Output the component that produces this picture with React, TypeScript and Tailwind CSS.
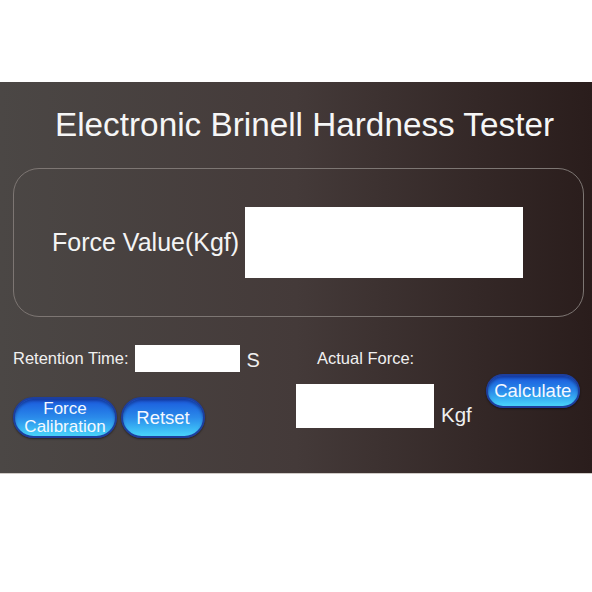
import React from 'react';

const font = { fontFamily: '"Liberation Sans", Arial, sans-serif' };

const BlueButton: React.FC<{ className?: string; children: React.ReactNode }> = ({ className = '', children }) => (
  <button
    className={`flex items-center justify-center rounded-full border-2 border-[#1d3f9e] bg-linear-to-b from-[#1d57dc] via-[#2b8aea] to-[#4ad4fa] text-[#f4f8ff] shadow-[inset_0_2px_3px_rgba(0,0,40,0.35),0_1px_2px_rgba(0,0,0,0.5)] ${className}`}
  >
    {children}
  </button>
);

export default function App() {
  return (
    <div className="h-[592px] w-[592px] bg-white pt-[82px]" style={font}>
      <div className="flex h-[392px] flex-col bg-linear-to-r from-[#4b4745] via-[#443a39] to-[#2a1d1c] border-b border-[#cfcac6]">
        <h1 className="pl-[55px] pt-[23px] text-[33.3px] leading-[40px] text-[#f6f6f6]">
          Electronic Brinell Hardness Tester
        </h1>

        <div className="ml-[13px] mt-[23px] flex h-[149px] w-[571px] items-center rounded-[26px] border border-[#7d7673] pl-[38px]">
          <span className="text-[25px] text-[#f4f4f4]">Force Value(Kgf)</span>
          <div className="ml-[6px] h-[71px] w-[278px] bg-white" />
        </div>

        <div className="flex flex-1">
          <div className="flex w-[296px] flex-col pl-[13px]">
            <div className="mt-[24px] flex items-center">
              <span className="text-[16.5px] text-[#f0f0f0]">Retention Time:</span>
              <div className="ml-[6px] h-[27px] w-[105px] bg-white" />
              <span className="ml-[7px] mt-[4px] text-[20px] text-[#f0f0f0]">S</span>
            </div>
            <div className="mt-[22px] flex gap-[4px]">
              <BlueButton className="h-[41px] w-[104px] flex-col text-[17px] leading-[18px]">
                <span>Force</span>
                <span>Calibration</span>
              </BlueButton>
              <BlueButton className="h-[41px] w-[84px] text-[18.5px]">Retset</BlueButton>
            </div>
          </div>

          <div className="flex flex-col">
            <span className="ml-[21px] mt-[31px] text-[16.5px] leading-[20px] text-[#f0f0f0]">Actual Force:</span>
            <div className="flex">
              <div className="mt-[16px] h-[44px] w-[138px] bg-white" />
              <span className="ml-[7px] mt-[32px] text-[20.5px] text-[#f0f0f0]">Kgf</span>
              <BlueButton className="ml-[14px] mt-[6px] h-[34px] w-[94px] text-[18.5px]">Calculate</BlueButton>
            </div>
          </div>
        </div>
      </div>
    </div>
  );
}
